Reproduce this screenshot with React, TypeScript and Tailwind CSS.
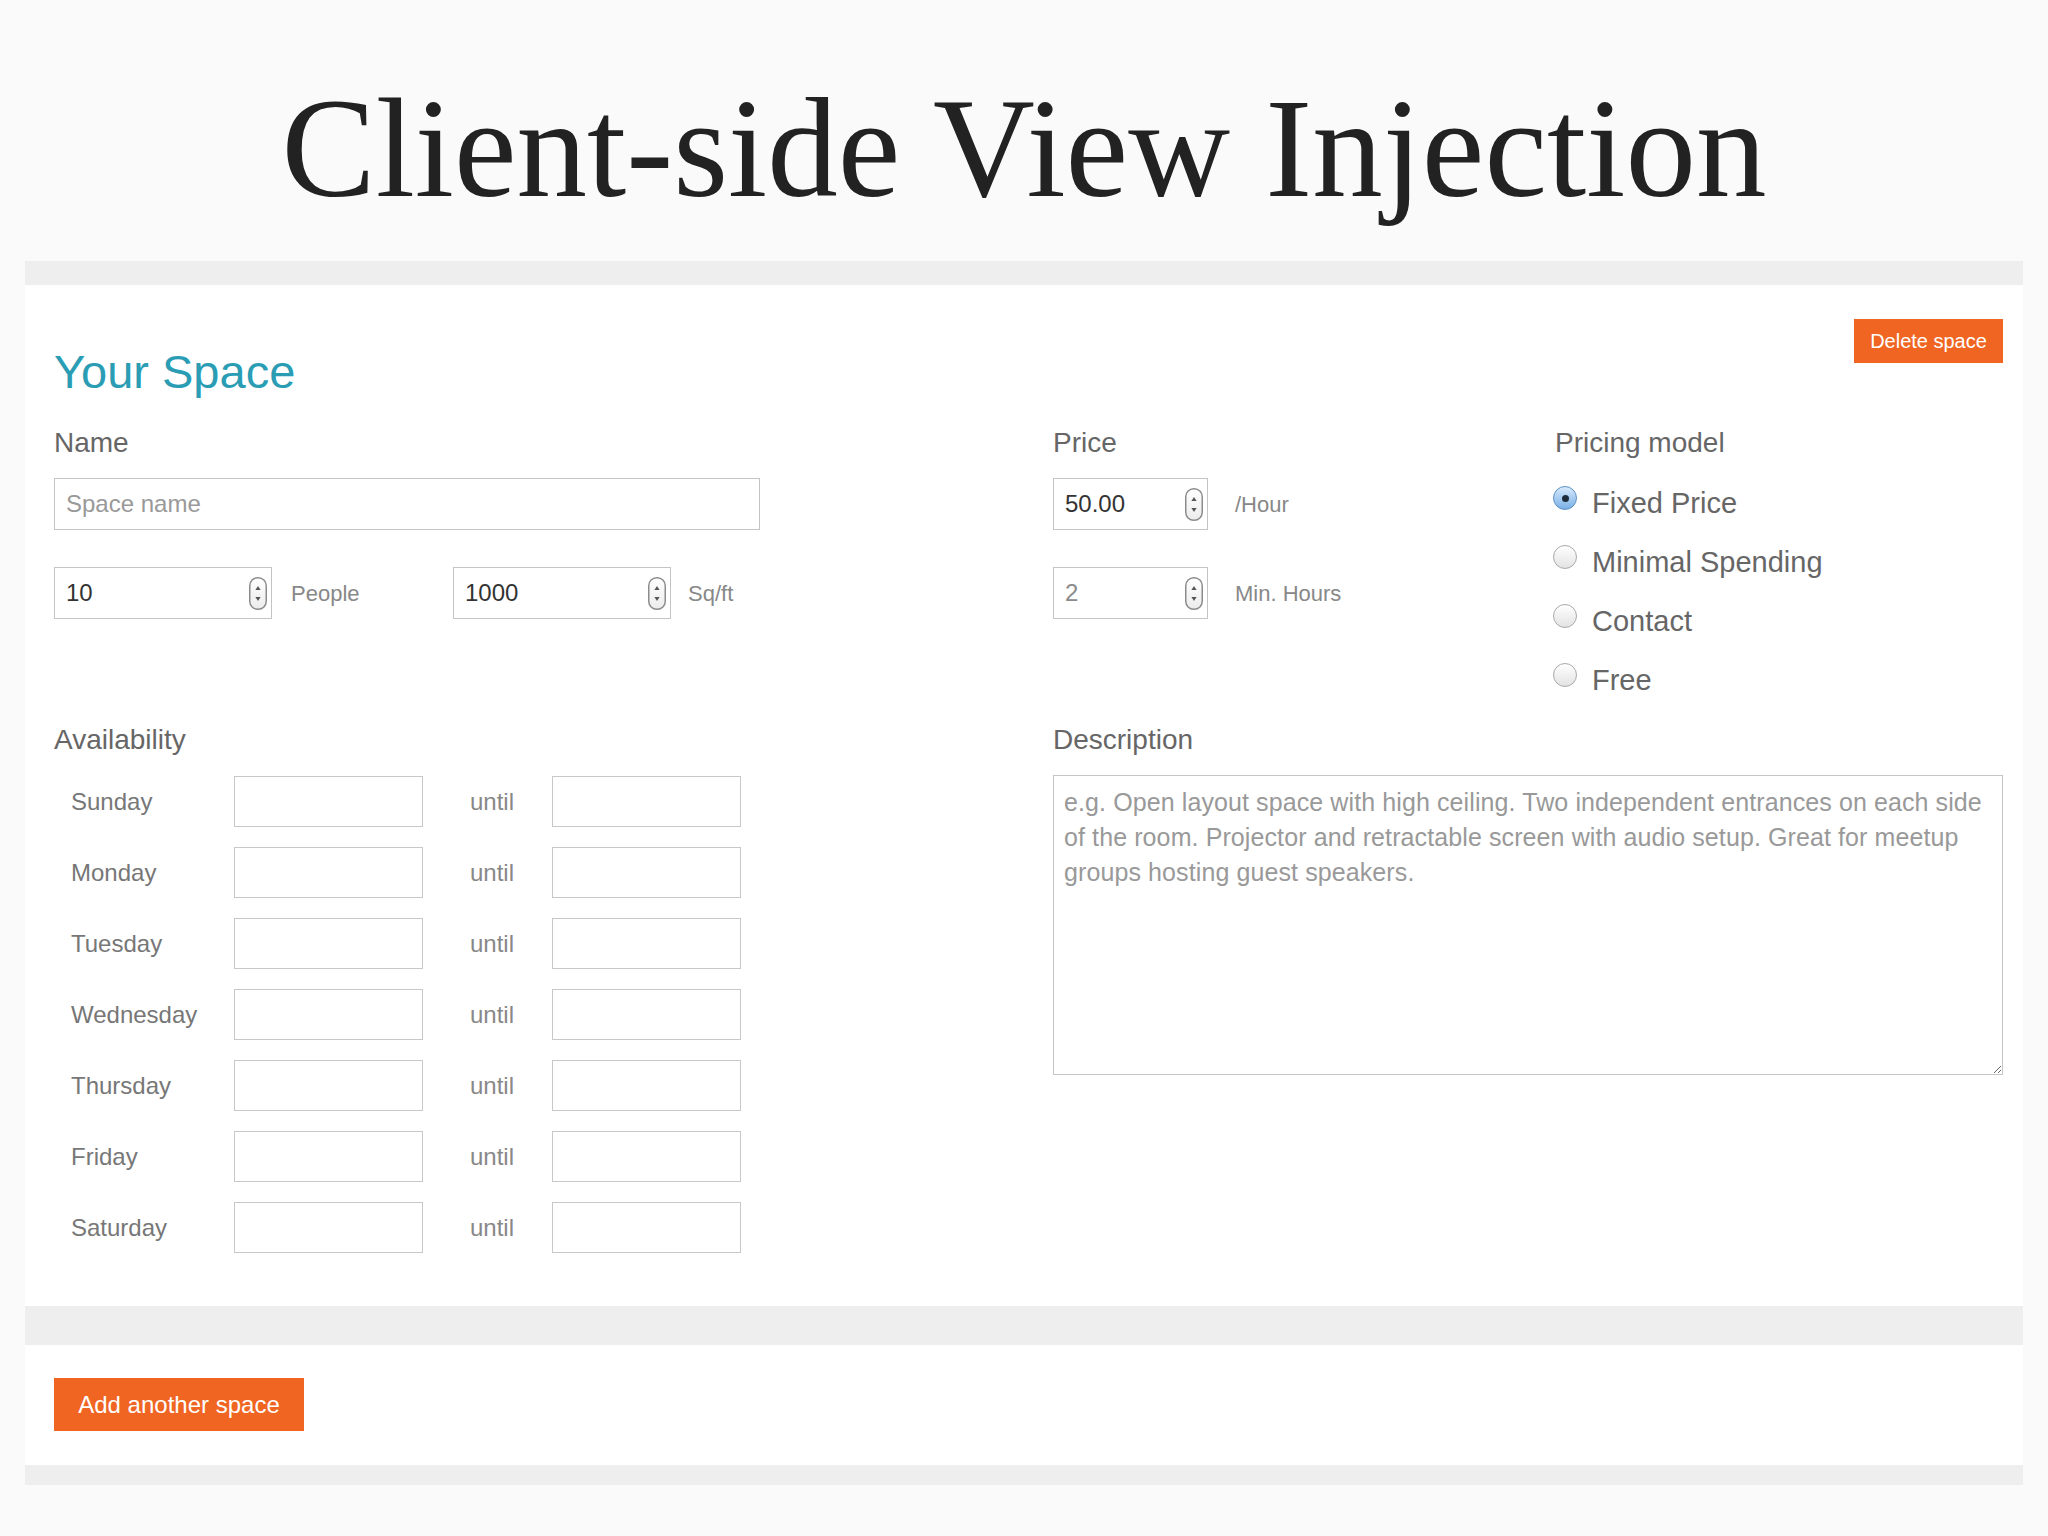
import React from "react";

const DAYS = ["Sunday", "Monday", "Tuesday", "Wednesday", "Thursday", "Friday", "Saturday"];

const PRICING = [
  { label: "Fixed Price", checked: true },
  { label: "Minimal Spending", checked: false },
  { label: "Contact", checked: false },
  { label: "Free", checked: false },
];

const DESCRIPTION_HINT =
  "e.g. Open layout space with high ceiling. Two independent entrances on each side\nof the room. Projector and retractable screen with audio setup. Great for meetup\ngroups hosting guest speakers.";

function Spinner() {
  return (
    <svg width="18" height="33" viewBox="0 0 18 33" className="shrink-0">
      <defs>
        <linearGradient id="spin-bg" x1="0" y1="0" x2="0" y2="1">
          <stop offset="0" stopColor="#ffffff" />
          <stop offset="1" stopColor="#ececec" />
        </linearGradient>
      </defs>
      <rect x="0.75" y="0.75" width="16.5" height="31.5" rx="8" fill="url(#spin-bg)" stroke="#8c8c8c" strokeWidth="1.5" />
      <path d="M9 9 L11.6 13 L6.4 13 Z" fill="#555" />
      <path d="M9 24 L11.6 20 L6.4 20 Z" fill="#555" />
    </svg>
  );
}

function NumberField({ value, width, muted }: { value: string; width: string; muted?: boolean }) {
  return (
    <div className={`flex items-center h-[52px] ${width} border border-[#c4c4c4] bg-white pl-[11px] pr-[4px]`}>
      <input
        type="text"
        defaultValue={value}
        className={`flex-1 min-w-0 bg-transparent outline-none text-[24px] ${muted ? "text-[#8a8a8a]" : "text-[#333]"}`}
      />
      <Spinner />
    </div>
  );
}

function Radio({ checked }: { checked: boolean }) {
  return checked ? (
    <span className="flex items-center justify-center w-[24px] h-[24px] -ml-[2px] rounded-full border border-[#5b8fc4] bg-linear-to-b from-[#d7eafc] to-[#79b0e6] shrink-0 self-start mt-[12px]">
      <span className="w-[7px] h-[7px] rounded-full bg-[#1d2b3a]" />
    </span>
  ) : (
    <span className="w-[24px] h-[24px] -ml-[2px] rounded-full border border-[#a9a9a9] bg-linear-to-b from-[#ffffff] to-[#e3e3e3] shrink-0 self-start mt-[12px]" />
  );
}

export default function App() {
  return (
    <div className="min-h-screen w-full bg-[#fafafa] font-['Liberation_Sans',Arial,sans-serif] pb-[51px]">
      {/* Slide title */}
      <h1 className="pt-[78px] text-center text-[141px] leading-none text-[#222] font-['Liberation_Serif','Times_New_Roman',serif]">
        Client-side View Injection
      </h1>

      <div className="mx-[25px] mt-[42px]">
        <div className="h-[24px] bg-[#eeeeee]" />

        {/* Space form */}
        <div className="bg-white pt-[34px] pl-[29px] pr-[20px] pb-[53px]">
          <div className="flex justify-between items-start">
            <h2 className="mt-[25px] text-[47px] leading-[56px] text-[#2a9db5]">Your Space</h2>
            <button className="w-[149px] h-[44px] bg-[#f06522] text-white text-[20px]">Delete space</button>
          </div>

          <div className="grid grid-cols-[999px_1fr] mt-[29px]">
            <div>
              <div className="text-[28px] leading-[28px] text-[#666]">Name</div>
              <input
                type="text"
                placeholder="Space name"
                className="mt-[21px] block w-[706px] h-[52px] border border-[#c4c4c4] px-[11px] text-[24px] text-[#333] placeholder:text-[#999] outline-none"
              />
              <div className="flex items-center mt-[37px]">
                <NumberField value="10" width="w-[218px]" />
                <span className="ml-[19px] w-[162px] text-[22px] text-[#888]">People</span>
                <NumberField value="1000" width="w-[218px]" />
                <span className="ml-[17px] text-[22px] text-[#888]">Sq/ft</span>
              </div>
            </div>

            <div className="flex">
              <div className="w-[502px]">
                <div className="text-[28px] leading-[28px] text-[#666]">Price</div>
                <div className="flex items-center mt-[21px]">
                  <NumberField value="50.00" width="w-[155px]" />
                  <span className="ml-[27px] text-[22px] text-[#888]">/Hour</span>
                </div>
                <div className="flex items-center mt-[37px]">
                  <NumberField value="2" width="w-[155px]" muted />
                  <span className="ml-[27px] text-[22px] text-[#888]">Min. Hours</span>
                </div>
              </div>

              <div>
                <div className="text-[28px] leading-[28px] text-[#666]">Pricing model</div>
                <div className="mt-[17px]">
                  {PRICING.map((p) => (
                    <label key={p.label} className="flex h-[59px] leading-[59px] text-[29px] text-[#666]">
                      <Radio checked={p.checked} />
                      <span className="ml-[15px]">{p.label}</span>
                    </label>
                  ))}
                </div>
              </div>
            </div>
          </div>

          <div className="grid grid-cols-[999px_1fr] mt-[16px]">
            <div>
              <div className="text-[28px] leading-[28px] text-[#666]">Availability</div>
              <div className="flex flex-col gap-[20px] mt-[22px]">
                {DAYS.map((day) => (
                  <div key={day} className="flex items-center h-[51px]">
                    <span className="w-[180px] pl-[17px] text-[24px] text-[#777]">{day}</span>
                    <input type="text" className="w-[189px] h-[51px] border border-[#c8c8c8] outline-none" />
                    <span className="w-[129px] pl-[47px] text-[24px] text-[#888]">until</span>
                    <input type="text" className="w-[189px] h-[51px] border border-[#c8c8c8] outline-none" />
                  </div>
                ))}
              </div>
            </div>

            <div>
              <div className="text-[28px] leading-[28px] text-[#666]">Description</div>
              <textarea
                placeholder={DESCRIPTION_HINT}
                className="mt-[21px] block w-full h-[300px] border border-[#c4c4c4] pt-[9px] pl-[10px] pr-[4px] text-[25px] leading-[35px] tracking-[0.1px] text-[#333] placeholder:text-[#999] outline-none"
              />
            </div>
          </div>
        </div>

        <div className="h-[39px] bg-[#eeeeee]" />

        {/* Footer actions */}
        <div className="bg-white h-[120px] pt-[33px] pl-[29px]">
          <button className="w-[250px] h-[53px] bg-[#f06522] text-white text-[24px]">Add another space</button>
        </div>

        <div className="h-[20px] bg-[#eeeeee]" />
      </div>
    </div>
  );
}
